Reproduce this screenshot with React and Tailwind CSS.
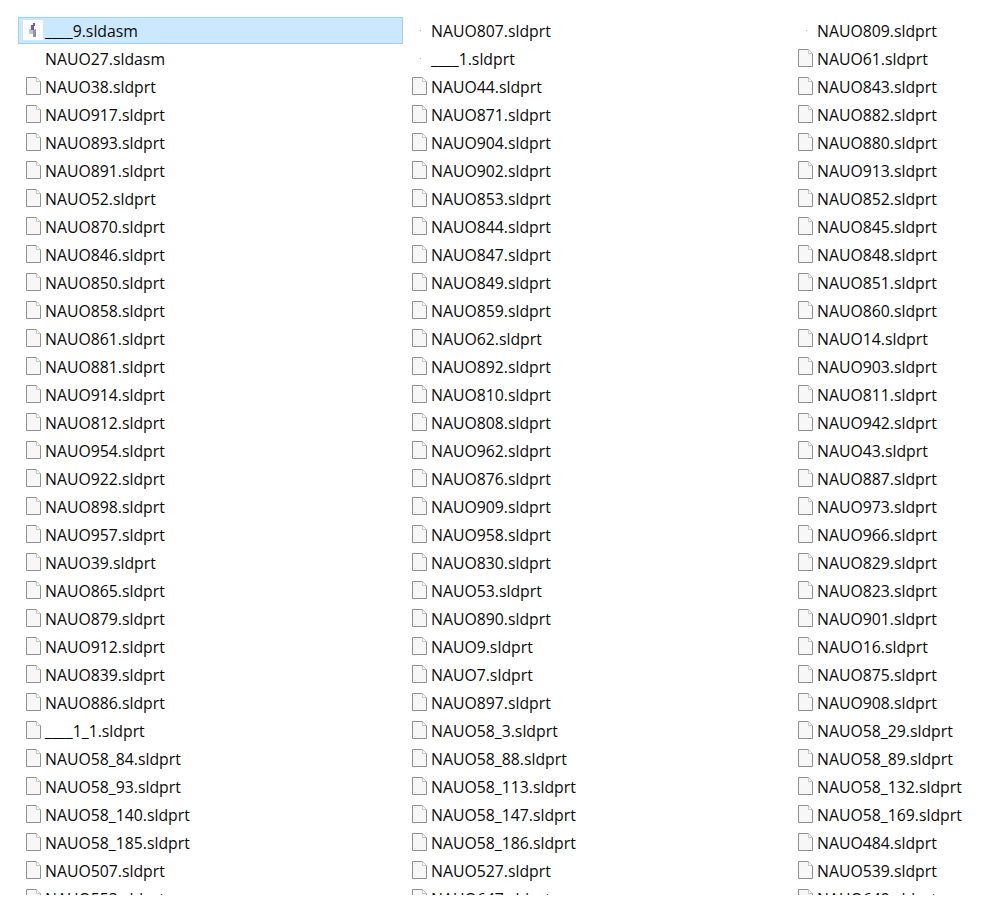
const COLUMNS = [
  ['____9.sldasm', 'NAUO27.sldasm', 'NAUO38.sldprt', 'NAUO917.sldprt', 'NAUO893.sldprt', 'NAUO891.sldprt', 'NAUO52.sldprt', 'NAUO870.sldprt', 'NAUO846.sldprt', 'NAUO850.sldprt', 'NAUO858.sldprt', 'NAUO861.sldprt', 'NAUO881.sldprt', 'NAUO914.sldprt', 'NAUO812.sldprt', 'NAUO954.sldprt', 'NAUO922.sldprt', 'NAUO898.sldprt', 'NAUO957.sldprt', 'NAUO39.sldprt', 'NAUO865.sldprt', 'NAUO879.sldprt', 'NAUO912.sldprt', 'NAUO839.sldprt', 'NAUO886.sldprt', '____1_1.sldprt', 'NAUO58_84.sldprt', 'NAUO58_93.sldprt', 'NAUO58_140.sldprt', 'NAUO58_185.sldprt', 'NAUO507.sldprt', 'NAUO553.sldprt'],
  ['NAUO807.sldprt', '____1.sldprt', 'NAUO44.sldprt', 'NAUO871.sldprt', 'NAUO904.sldprt', 'NAUO902.sldprt', 'NAUO853.sldprt', 'NAUO844.sldprt', 'NAUO847.sldprt', 'NAUO849.sldprt', 'NAUO859.sldprt', 'NAUO62.sldprt', 'NAUO892.sldprt', 'NAUO810.sldprt', 'NAUO808.sldprt', 'NAUO962.sldprt', 'NAUO876.sldprt', 'NAUO909.sldprt', 'NAUO958.sldprt', 'NAUO830.sldprt', 'NAUO53.sldprt', 'NAUO890.sldprt', 'NAUO9.sldprt', 'NAUO7.sldprt', 'NAUO897.sldprt', 'NAUO58_3.sldprt', 'NAUO58_88.sldprt', 'NAUO58_113.sldprt', 'NAUO58_147.sldprt', 'NAUO58_186.sldprt', 'NAUO527.sldprt', 'NAUO647.sldprt'],
  ['NAUO809.sldprt', 'NAUO61.sldprt', 'NAUO843.sldprt', 'NAUO882.sldprt', 'NAUO880.sldprt', 'NAUO913.sldprt', 'NAUO852.sldprt', 'NAUO845.sldprt', 'NAUO848.sldprt', 'NAUO851.sldprt', 'NAUO860.sldprt', 'NAUO14.sldprt', 'NAUO903.sldprt', 'NAUO811.sldprt', 'NAUO942.sldprt', 'NAUO43.sldprt', 'NAUO887.sldprt', 'NAUO973.sldprt', 'NAUO966.sldprt', 'NAUO829.sldprt', 'NAUO823.sldprt', 'NAUO901.sldprt', 'NAUO16.sldprt', 'NAUO875.sldprt', 'NAUO908.sldprt', 'NAUO58_29.sldprt', 'NAUO58_89.sldprt', 'NAUO58_132.sldprt', 'NAUO58_169.sldprt', 'NAUO484.sldprt', 'NAUO539.sldprt', 'NAUO649.sldprt'],
]

// icon per row: page = blank document, dot = thumbnail still loading, none = no icon at all
const iconFor = (col, row) => {
  if (row === 0 && col === 0) return 'thumb'
  if (row === 1 && col === 0) return 'none'
  if (row === 0 || (row === 1 && col === 1)) return 'dot'
  return 'page'
}

function PageIcon() {
  return (
    <svg width="15" height="18" viewBox="0 0 15 18" className="ml-[7px] -mt-px shrink-0">
      <path d="M0.5 0.5H10.5L14.5 4.5V17.5H0.5Z" fill="#f7f7f7" stroke="#909090" />
      <path d="M10.5 0.5V4.5H14.5" fill="#ffffff" stroke="#c4c4c4" />
    </svg>
  )
}

function ThumbIcon() {
  return (
    <div className="ml-1 -mt-px w-5 h-5 bg-white shrink-0 flex items-center justify-center">
      <svg width="9" height="14" viewBox="0 0 9 14">
        <rect x="0" y="6" width="7" height="5" fill="#c8c4c8" />
        <rect x="2" y="2" width="3" height="5" fill="#5a5fc8" />
        <rect x="4" y="0" width="2" height="3" fill="#c8404a" />
        <rect x="4" y="7" width="3" height="7" fill="#9a8fa0" />
      </svg>
    </div>
  )
}

function FileRow({ name, icon, selected }) {
  return (
    <div className={`h-[27px] flex items-center border ${selected ? 'bg-[#cce8ff] border-[#99d1ff]' : 'border-transparent'}`}>
      <div className="w-[26px] h-full flex items-center shrink-0">
        {icon === 'page' && <PageIcon />}
        {icon === 'thumb' && <ThumbIcon />}
        {icon === 'dot' && <div className="ml-[15px] w-px h-px bg-[#b8b8d8]" />}
      </div>
      <span className="mt-0.5 text-[#0a0a0a] text-[15.8px] leading-none whitespace-nowrap">{name}</span>
    </div>
  )
}

export default function App() {
  return (
    <div className="h-[898px] bg-white">
      <div className="h-[895px] overflow-hidden pt-[17px] pl-[18px] grid grid-cols-[385px_385px_190px] gap-x-px font-['Open_Sans','Noto_Sans',sans-serif]">
        {COLUMNS.map((files, col) => (
          <div key={col} className="min-w-0 flex flex-col gap-y-px">
            {files.map((name, row) => (
              <FileRow key={name} name={name} icon={iconFor(col, row)} selected={col === 0 && row === 0} />
            ))}
          </div>
        ))}
      </div>
    </div>
  )
}
